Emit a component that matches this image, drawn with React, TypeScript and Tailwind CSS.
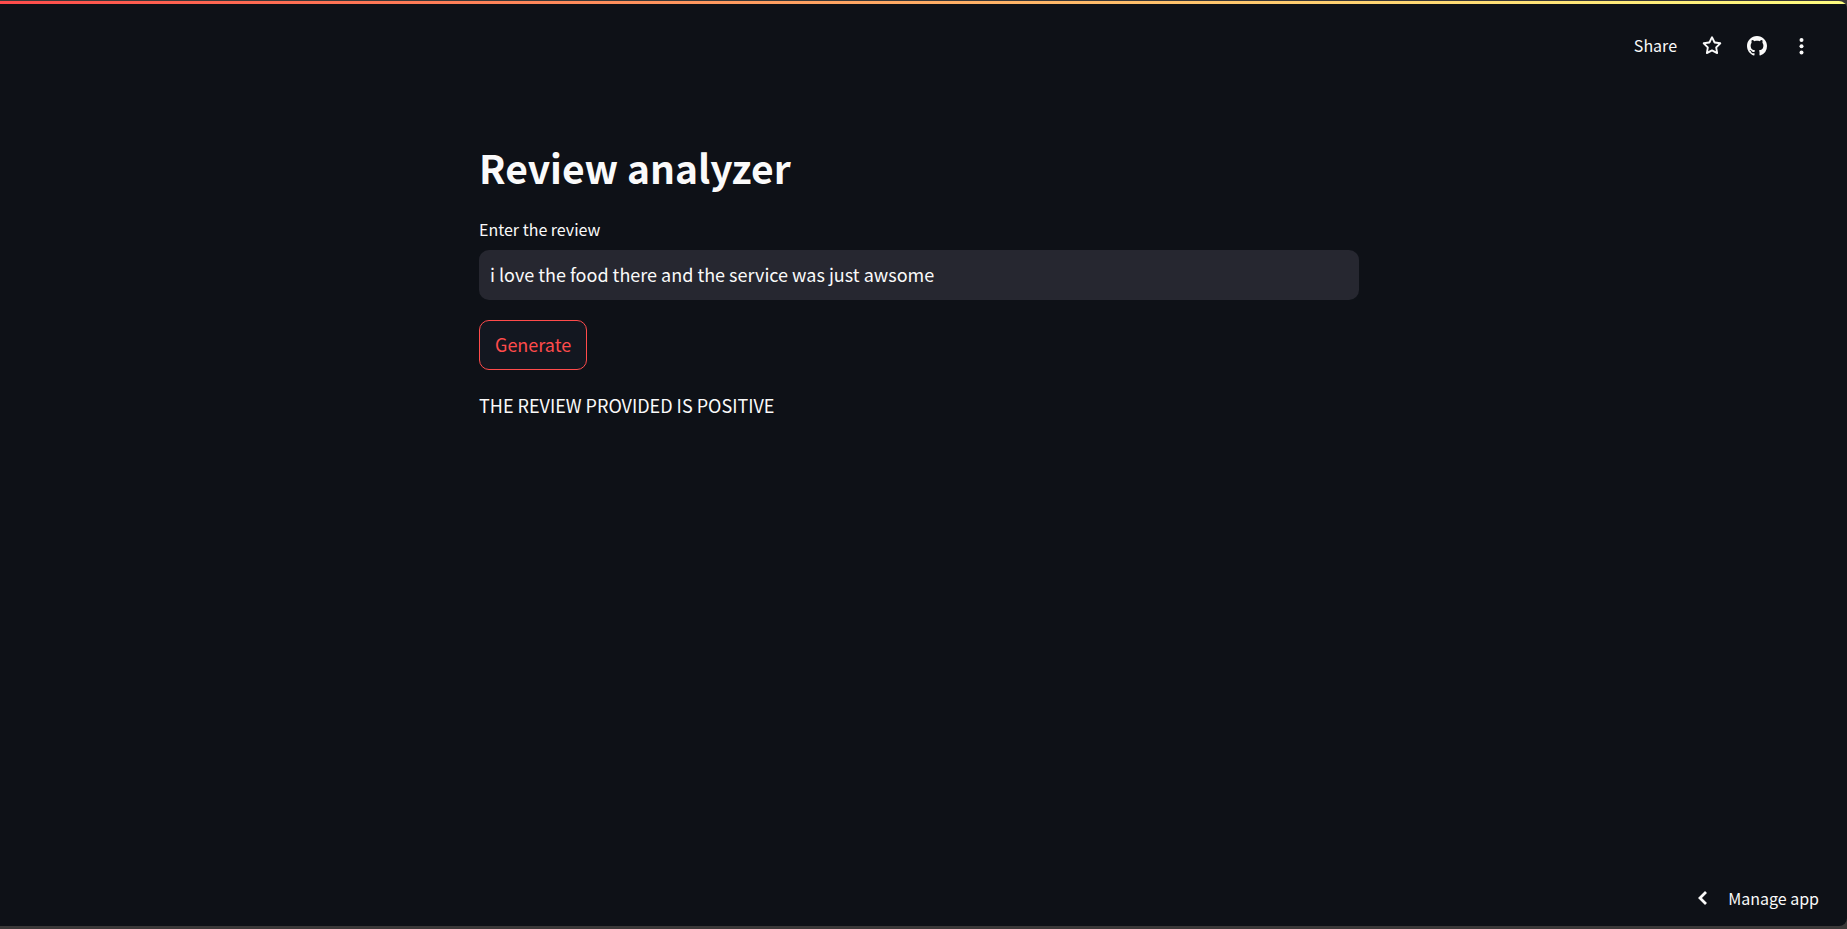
import { useState } from "react";

function StarIcon() {
  return (
    <svg viewBox="0 0 16 16" className="size-5" fill="currentColor" aria-hidden="true">
      <path d="M8 .25a.75.75 0 0 1 .673.418l1.882 3.815 4.21.612a.75.75 0 0 1 .416 1.279l-3.046 2.97.719 4.192a.751.751 0 0 1-1.088.791L8 12.347l-3.766 1.98a.75.75 0 0 1-1.088-.79l.72-4.194L.818 6.374a.75.75 0 0 1 .416-1.28l4.21-.611L7.327.668A.75.75 0 0 1 8 .25Zm0 2.445L6.615 5.5a.75.75 0 0 1-.564.41l-3.097.45 2.24 2.184a.75.75 0 0 1 .216.664l-.528 3.084 2.769-1.456a.75.75 0 0 1 .698 0l2.77 1.456-.53-3.084a.75.75 0 0 1 .216-.664l2.24-2.183-3.096-.45a.75.75 0 0 1-.564-.41L8 2.694Z" />
    </svg>
  );
}

function GithubIcon() {
  return (
    <svg viewBox="0 0 16 16" className="size-5" fill="currentColor" aria-hidden="true">
      <path d="M8 0C3.58 0 0 3.58 0 8c0 3.54 2.29 6.53 5.47 7.59.4.07.55-.17.55-.38 0-.19-.01-.82-.01-1.49-2.01.37-2.53-.49-2.69-.94-.09-.23-.48-.94-.82-1.13-.28-.15-.68-.52-.01-.53.63-.01 1.08.58 1.23.82.72 1.21 1.87.87 2.33.66.07-.52.28-.87.51-1.07-1.78-.2-3.64-.89-3.64-3.95 0-.87.31-1.59.82-2.15-.08-.2-.36-1.02.08-2.12 0 0 .67-.21 2.2.82.64-.18 1.32-.27 2-.27s1.36.09 2 .27c1.53-1.04 2.2-.82 2.2-.82.44 1.1.16 1.92.08 2.12.51.56.82 1.27.82 2.15 0 3.07-1.87 3.75-3.65 3.95.29.25.54.73.54 1.48 0 1.07-.01 1.93-.01 2.2 0 .21.15.46.55.38A8.01 8.01 0 0 0 16 8c0-4.42-3.58-8-8-8Z" />
    </svg>
  );
}

function MoreIcon() {
  return (
    <svg viewBox="0 0 20 20" className="size-5" fill="currentColor" aria-hidden="true">
      <circle cx="9.5" cy="4" r="2" />
      <circle cx="9.5" cy="10.2" r="2" />
      <circle cx="9.5" cy="16.4" r="2" />
    </svg>
  );
}

function ChevronLeftIcon() {
  return (
    <svg viewBox="0 0 20 20" className="size-5" fill="none" aria-hidden="true">
      <path d="M14 4 8 10l6 6" stroke="currentColor" strokeWidth="2.8" />
    </svg>
  );
}

export default function App() {
  const [review, setReview] = useState("i love the food there and the service was just awsome");

  return (
    <div className="flex min-h-screen flex-col bg-[#3b3939] pt-px pb-[3px] font-['Noto_Sans_CJK_SC','Noto_Sans',sans-serif] text-[#fafafa]">
      <div className="flex flex-1 flex-col overflow-hidden rounded-r-lg bg-[#0e1117]">
        <div className="h-[3px] bg-linear-to-r from-[#ff4b4b] to-[#fffd80]" />
        <header className="flex h-[84px] items-center justify-end gap-[25px] pr-[35px]">
          <button type="button" className="pb-0.5 text-base">Share</button>
          <button type="button" aria-label="Favorite"><StarIcon /></button>
          <a href="#source" aria-label="View source on GitHub"><GithubIcon /></a>
          <button type="button" aria-label="More options"><MoreIcon /></button>
        </header>

        <main className="w-full flex-1 pr-[9px]">
          <div className="mx-auto w-full max-w-[880px] pt-[49px]">
            <h1 className="text-[39px] leading-[60px] font-bold">Review analyzer</h1>
            <form className="mt-[18px]" onSubmit={(event) => event.preventDefault()}>
              <label htmlFor="review" className="block text-base leading-7">Enter the review</label>
              <input
                id="review"
                type="text"
                value={review}
                onChange={(event) => setReview(event.target.value)}
                className="mt-[7px] block h-[50px] w-full rounded-[10px] bg-[#262730] px-[11px] pb-0.5 text-lg outline-none"
              />
              <button
                type="submit"
                className="mt-5 flex h-[50px] items-center rounded-[10px] border border-[#ff4b4b] bg-[#131720] px-[15px] pb-0.5 text-lg text-[#ff4b4b]"
              >
                Generate
              </button>
            </form>
            <p className="mt-[19px] text-lg leading-8">THE REVIEW PROVIDED IS POSITIVE</p>
          </div>
        </main>

        <footer className="flex justify-end pr-7 pb-3">
          <button type="button" className="flex items-center gap-4 text-base leading-8">
            <ChevronLeftIcon />
            Manage app
          </button>
        </footer>
      </div>
    </div>
  );
}
